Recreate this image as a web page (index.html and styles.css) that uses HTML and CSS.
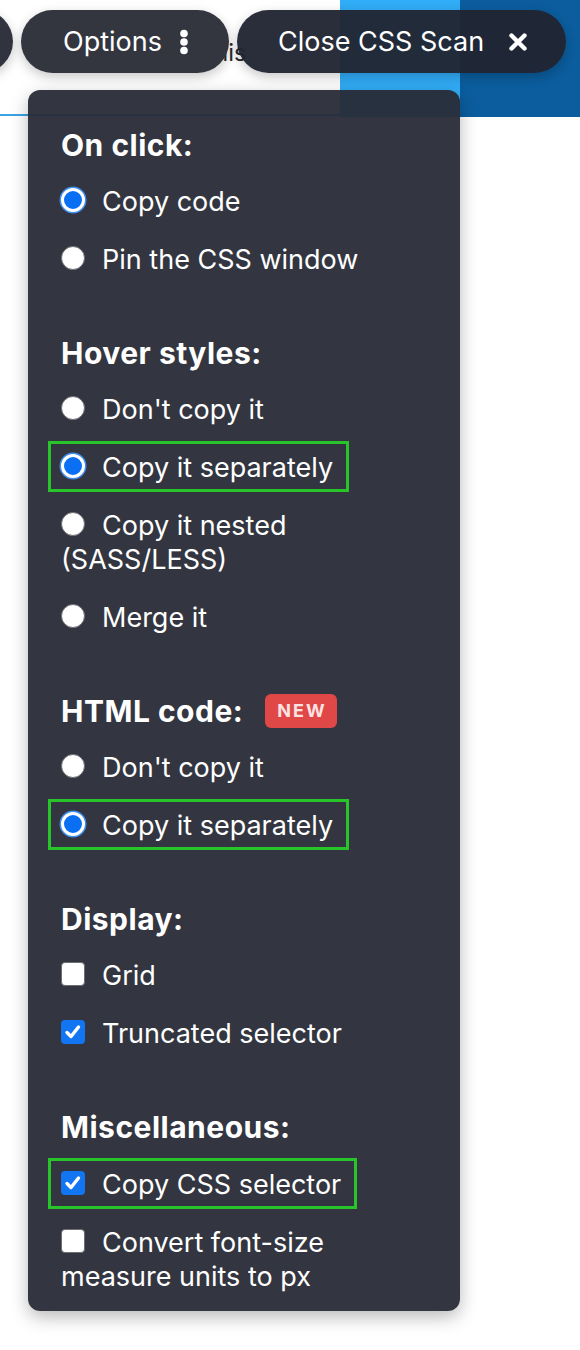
FILE: index.html
```html
<!DOCTYPE html>
<html lang="en">
<head>
<meta charset="utf-8">
<title>CSS Scan options</title>
<link rel="stylesheet" href="styles.css">
</head>
<body>
<div class="page">
  <header class="bg-header">
    <div class="bg-left"><span class="bg-word">nis</span></div>
    <div class="bg-light"></div>
    <div class="bg-dark"></div>
  </header>

  <div class="toolbar">
    <div class="btn btn-partial"></div>
    <div class="btn btn-options">
      <span>Options</span>
      <svg class="dots" width="10" height="26" viewBox="0 0 10 26"><circle cx="5" cy="4.5" r="3.8" fill="#fff"/><circle cx="5" cy="13" r="3.8" fill="#fff"/><circle cx="5" cy="21.5" r="3.8" fill="#fff"/></svg>
    </div>
    <div class="btn btn-close">
      <span>Close CSS Scan</span>
      <svg class="xicon" width="20" height="18" viewBox="0 0 20 18"><path d="M3.5 2.5 L16.5 15.5 M16.5 2.5 L3.5 15.5" stroke="#fff" stroke-width="4.4" stroke-linecap="round"/></svg>
    </div>
  </div>

  <div class="panel">
    <section class="group">
      <h2 class="heading">On click:</h2>
      <p class="row"><span class="radio on"></span>Copy code</p>
      <p class="row"><span class="radio"></span>Pin the CSS window</p>
    </section>

    <section class="group">
      <h2 class="heading">Hover styles:</h2>
      <p class="row"><span class="radio"></span>Don't copy it</p>
      <p class="row hl"><span class="radio on"></span>Copy it separately</p>
      <p class="row"><span class="radio"></span>Copy it nested (SASS/LESS)</p>
      <p class="row"><span class="radio"></span>Merge it</p>
    </section>

    <section class="group">
      <h2 class="heading">HTML code: <span class="badge">NEW</span></h2>
      <p class="row"><span class="radio"></span>Don't copy it</p>
      <p class="row hl"><span class="radio on"></span>Copy it separately</p>
    </section>

    <section class="group">
      <h2 class="heading">Display:</h2>
      <p class="row"><span class="check"></span>Grid</p>
      <p class="row"><span class="check on"><svg viewBox="0 0 24 24" width="24" height="24"><path d="M6 12.5 L10 16.5 L17.5 7" fill="none" stroke="#fff" stroke-width="3.4" stroke-linecap="round" stroke-linejoin="round"/></svg></span>Truncated selector</p>
    </section>

    <section class="group">
      <h2 class="heading">Miscellaneous:</h2>
      <p class="row hl"><span class="check on"><svg viewBox="0 0 24 24" width="24" height="24"><path d="M6 12.5 L10 16.5 L17.5 7" fill="none" stroke="#fff" stroke-width="3.4" stroke-linecap="round" stroke-linejoin="round"/></svg></span>Copy CSS selector</p>
      <p class="row"><span class="check"></span>Convert font-size measure units to px</p>
    </section>
  </div>
</div>
</body>
</html>
```

FILE: styles.css
```css
* { box-sizing: border-box; }

html, body {
  margin: 0;
  padding: 0;
  background: #ffffff;
}

body {
  font-family: Inter, "Noto Sans", "Liberation Sans", sans-serif;
  color: #ffffff;
}

.page {
  position: relative;
  width: 580px;
  height: 1350px;
  overflow: hidden;
}

/* background page (behind the overlay) */
.bg-header {
  display: flex;
  height: 117px;
}

.bg-left {
  flex: 1;
  border-bottom: 2px solid #3ba3e4;
  margin-bottom: 1px;
  padding: 38px 0 0 214px;
}

.bg-word {
  font-size: 24px;
  color: #2a2a2a;
}

.bg-light {
  width: 120px;
  background: #31acf6;
}

.bg-dark {
  width: 120px;
  background: #0b5d9e;
}

/* floating toolbar */
.toolbar {
  position: absolute;
  top: 10px;
  left: -50px;
  display: flex;
  gap: 8px;
}

.btn {
  height: 63px;
  border-radius: 32px;
  background: rgba(42, 45, 56, 0.97);
  box-shadow: 0 4px 12px rgba(0, 0, 0, 0.22);
  display: flex;
  align-items: center;
  font-size: 27px;
  color: #ffffff;
}

.btn-partial {
  width: 63px;
}

.btn-options {
  width: 208px;
  padding-left: 42px;
  gap: 17px;
  background: #33363f;
}

.btn-close {
  width: 329px;
  padding-left: 41px;
  gap: 24px;
  background: rgba(32, 37, 50, 0.96);
}

.dots, .xicon { display: block; }

/* options panel */
.panel {
  position: absolute;
  top: 90px;
  left: 28px;
  width: 432px;
  padding: 38px 30px 17px 33px;
  border-radius: 12px;
  background: rgba(38, 41, 52, 0.94);
  box-shadow: 0 6px 18px rgba(0, 0, 0, 0.28);
}

.group + .group {
  margin-top: 59px;
}

.heading {
  margin: 0;
  font-size: 30px;
  line-height: 34px;
  font-weight: 700;
  letter-spacing: 0.5px;
  display: flex;
  align-items: center;
  gap: 22px;
}

.badge {
  display: inline-block;
  background: #e04747;
  color: #fbe3e3;
  font-size: 18px;
  font-weight: 700;
  letter-spacing: 2px;
  line-height: 34px;
  padding: 0 10px 0 12px;
  border-radius: 6px;
}

.row {
  margin: 24px 0 0;
  font-size: 27px;
  line-height: 34px;
  width: fit-content;
}

.heading + .row {
  margin-top: 23px;
}

.radio, .check {
  display: inline-block;
  width: 24px;
  height: 24px;
  margin-right: 17px;
  vertical-align: -1px;
  background: #ffffff;
}

.radio {
  border-radius: 50%;
  border: 1.5px solid #6e6e72;
}

.radio.on {
  border: 3px solid #ffffff;
  background: #0b6ff4;
  box-shadow: 0 0 0 1.5px #3f8cf0;
}

.check {
  border-radius: 4px;
  border: 1.5px solid #6e6e72;
}

.check.on {
  border: none;
  background: #1275f2;
}

.check svg {
  display: block;
  width: 24px;
  height: 24px;
}

.row.hl {
  border: 3px solid #27c52a;
  padding: 7px 13px 4px 10px;
  margin-left: -13px;
  margin-top: 14px;
  margin-bottom: -7px;
}
```
